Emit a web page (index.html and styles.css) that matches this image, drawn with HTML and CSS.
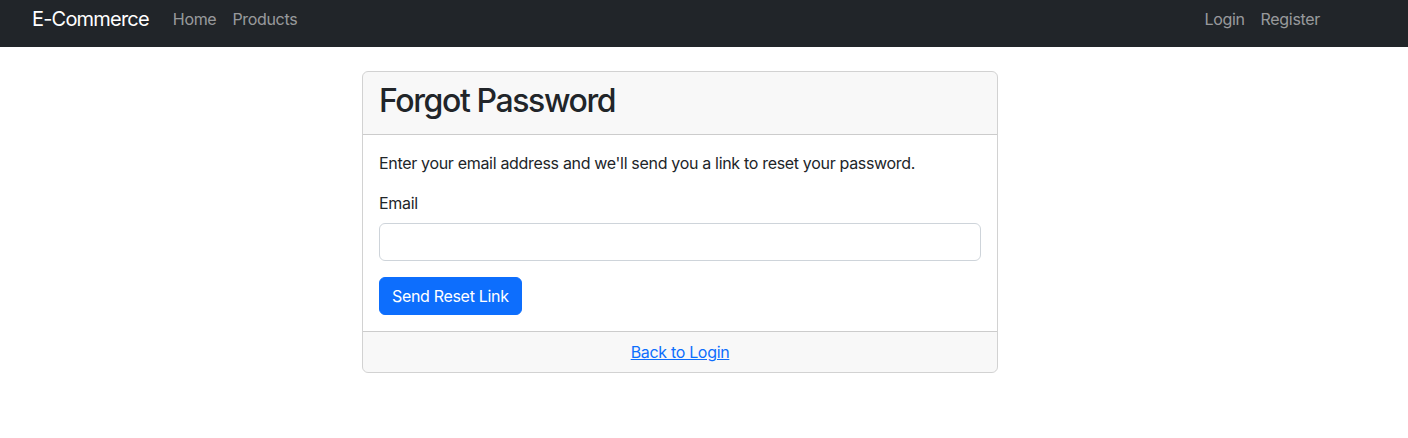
FILE: index.html
```html
<!DOCTYPE html>
<html lang="en">
<head>
<meta charset="utf-8">
<title>Forgot Password</title>
<link rel="stylesheet" href="styles.css">
</head>
<body>
<nav class="navbar">
  <div class="nav-container">
    <a class="brand" href="#">E-Commerce</a>
    <ul class="nav-list">
      <li><a class="nav-link" href="#">Home</a></li>
      <li><a class="nav-link" href="#">Products</a></li>
    </ul>
    <ul class="nav-list nav-right">
      <li><a class="nav-link" href="#">Login</a></li>
      <li><a class="nav-link" href="#">Register</a></li>
    </ul>
  </div>
</nav>
<main class="container">
  <div class="col">
    <div class="card">
      <div class="card-header">
        <h2 class="title">Forgot Password</h2>
      </div>
      <div class="card-body">
        <p class="intro">Enter your email address and we'll send you a link to reset your password.</p>
        <form class="form">
          <div class="field">
            <label class="label" for="email">Email</label>
            <input class="input" type="email" id="email">
          </div>
          <button class="btn" type="button">Send Reset Link</button>
        </form>
      </div>
      <div class="card-footer">
        <a class="link" href="#">Back to Login</a>
      </div>
    </div>
  </div>
</main>
</body>
</html>
```
FILE: styles.css
```css
* { box-sizing: border-box; }
html, body { margin: 0; padding: 0; }
body {
  font-family: Inter, "Liberation Sans", Arial, sans-serif;
  font-size: 16px;
  line-height: 1.5;
  letter-spacing: -0.02em;
  color: #212529;
  background: #fff;
}
.navbar {
  background: #212529;
  height: 47px;
}
.nav-container {
  width: 1320px;
  margin-left: 20px;
  padding: 0 12px;
  display: flex;
  align-items: flex-start;
}
.brand {
  color: #fff;
  font-size: 20px;
  line-height: 30px;
  letter-spacing: -0.04em;
  margin-top: 4px;
  margin-right: 16px;
  text-decoration: none;
}
.nav-list {
  list-style: none;
  margin: 7px 0 0;
  padding: 0;
  display: flex;
}
.nav-right { margin-left: auto; }
.nav-link {
  display: block;
  padding: 0 8px;
  color: rgba(255, 255, 255, 0.55);
  text-decoration: none;
  line-height: 24px;
}
.container {
  width: 1320px;
  margin-left: 20px;
  padding: 24px 12px 0;
  display: flex;
  justify-content: center;
}
.col {
  width: 660px;
  padding: 0 12px;
}
.card {
  border: 1px solid rgba(0, 0, 0, 0.175);
  border-radius: 6px;
  overflow: hidden;
}
.card-header {
  background: rgba(33, 37, 41, 0.03);
  padding: 8px 16px;
  border-bottom: 1px solid rgba(0, 0, 0, 0.175);
}
.title {
  margin: 0 0 8px;
  font-size: 32px;
  font-weight: 500;
  line-height: 1.2;
  letter-spacing: -0.044em;
  position: relative;
  top: 2px;
}
.card-body { padding: 16px; }
.intro { margin: 0 0 16px; }
.field { margin-bottom: 16px; }
.label { display: block; margin-bottom: 8px; }
.input {
  display: block;
  width: 100%;
  height: 38px;
  padding: 6px 12px;
  font: inherit;
  border: 1px solid #ced4da;
  border-radius: 6px;
  background: #fff;
}
.btn {
  font: inherit;
  letter-spacing: -0.02em;
  color: #fff;
  background: #0d6efd;
  border: 1px solid #0d6efd;
  border-radius: 6px;
  padding: 6px 12px;
  line-height: 24px;
  cursor: pointer;
}
.card-footer {
  background: rgba(33, 37, 41, 0.03);
  border-top: 1px solid rgba(0, 0, 0, 0.175);
  padding: 8px 16px;
  text-align: center;
}
.link { color: #0d6efd; text-decoration: underline; }
```
